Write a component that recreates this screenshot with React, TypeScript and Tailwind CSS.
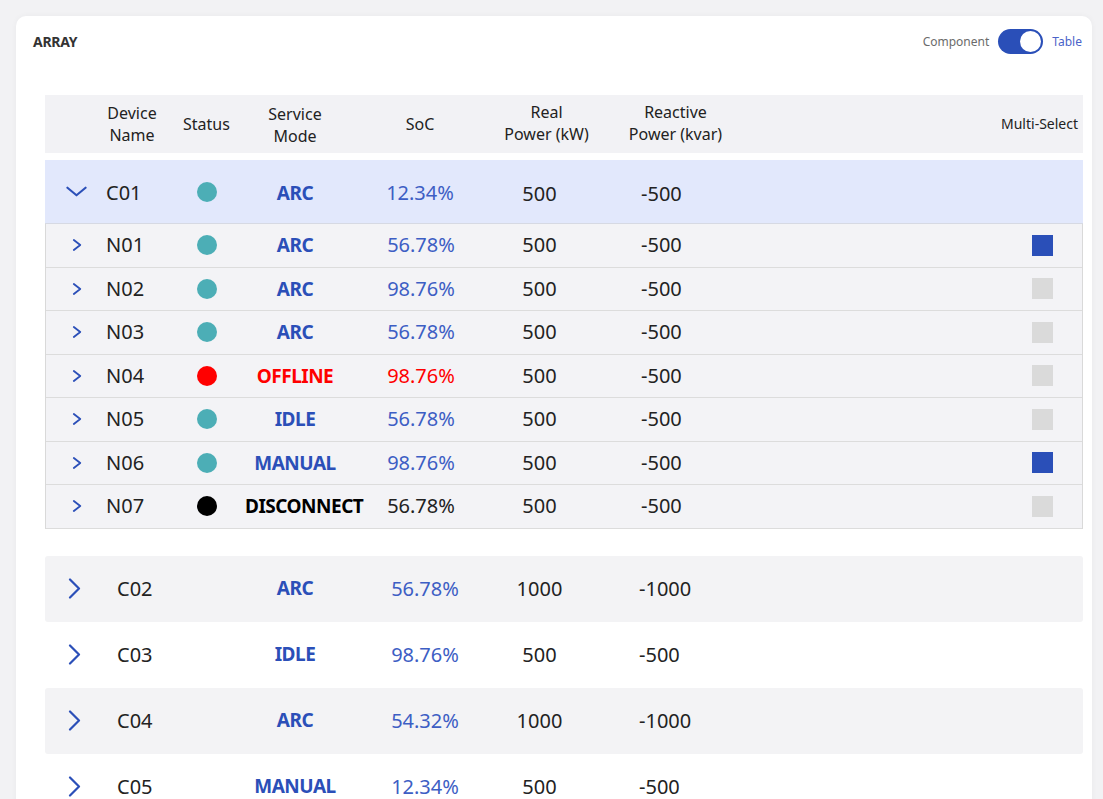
import React from "react";

type Child = { name: string; status: string; mode: string; soc: string; checked: boolean };

const children: Child[] = [
    { name: "N01", status: "ok", mode: "ARC", soc: "56.78%", checked: true },
    { name: "N02", status: "ok", mode: "ARC", soc: "98.76%", checked: false },
    { name: "N03", status: "ok", mode: "ARC", soc: "56.78%", checked: false },
    { name: "N04", status: "offline", mode: "OFFLINE", soc: "98.76%", checked: false },
    { name: "N05", status: "ok", mode: "IDLE", soc: "56.78%", checked: false },
    { name: "N06", status: "ok", mode: "MANUAL", soc: "98.76%", checked: true },
    { name: "N07", status: "disc", mode: "DISCONNECT", soc: "56.78%", checked: false },
];

const clusters = [
    { name: "C02", mode: "ARC", soc: "56.78%", real: "1000", reactive: "-1000", shade: true },
    { name: "C03", mode: "IDLE", soc: "98.76%", real: "500", reactive: "-500", shade: false },
    { name: "C04", mode: "ARC", soc: "54.32%", real: "1000", reactive: "-1000", shade: true },
    { name: "C05", mode: "MANUAL", soc: "12.34%", real: "500", reactive: "-500", shade: false },
];

const dotColor = (s: string) =>
    s === "offline" ? "bg-[#ff0000]" : s === "disc" ? "bg-black" : "bg-[#4caeb6]";

const modeColor = (s: string) =>
    s === "offline" ? "text-[#ff0000]" : s === "disc" ? "text-black" : "text-[#2b4fb8]";

const socColor = (s: string) =>
    s === "offline" ? "text-[#ff0000]" : s === "disc" ? "text-[#222]" : "text-[#3d5ec4]";

const ChevronRight = ({ className }: { className?: string }) => (
    <svg viewBox="0 0 12 14" className={className} fill="none">
        <polyline points="2,1.5 9,7 2,12.5" stroke="#2b4fb8" strokeWidth="2" strokeLinecap="round" strokeLinejoin="round" />
    </svg>
);

const App = () => {
    return <div className="min-h-[799px] bg-[#f2f2f4] pt-4 pl-4 pr-[11px] font-['Noto_Sans',sans-serif] text-[#222]">
        <div className="bg-white rounded-t-[10px] shadow-[0_0_6px_rgba(0,0,0,0.04)] min-h-[783px] pb-4">
            <div className="flex items-center justify-between h-[50px] pl-[17px] pr-[10px] pt-[1px]">
                <div className="text-[14px] font-bold text-[#333] tracking-[-0.3px]">ARRAY</div>
                <div className="flex items-center gap-[9px] text-[12px]">
                    <span className="text-[#6b6b6b]">Component</span>
                    <div className="w-[45px] h-[25px] rounded-full bg-[#2a4fb8] flex items-center justify-end pr-[2px]">
                        <div className="w-[21px] h-[21px] rounded-full bg-white"></div>
                    </div>
                    <span className="text-[#4a63c9]">Table</span>
                </div>
            </div>

            <div className="ml-[29px] mr-[9px] mt-[29px]">
                {/* header */}
                <div className="flex items-center h-[58px] bg-[#f2f2f5] text-[16px] leading-[22px] text-[#222]">
                    <div className="w-[51px]"></div>
                    <div className="w-[72px] text-center">Device<br />Name</div>
                    <div className="w-[77px] text-center">Status</div>
                    <div className="w-[100px] text-center pt-[2px]">Service<br />Mode</div>
                    <div className="w-[150px] text-center">SoC</div>
                    <div className="w-[103px] text-center pb-[2px]">Real<br />Power (kW)</div>
                    <div className="w-[155px] text-center pb-[2px]">Reactive<br />Power (kvar)</div>
                    <div className="grow text-right pr-[5px] text-[14px]">Multi-Select</div>
                </div>

                {/* C01 expanded */}
                <div className="mt-[7px] flex items-center h-[64px] pt-[3px] bg-[#e2e8fc] border-b border-[#d6d9e3] text-[20px]">
                    <div className="w-[51px] flex justify-end pr-[9px] pb-[3px]">
                        <svg viewBox="0 0 22 11" className="w-[21px] h-[11px]" fill="none">
                            <polyline points="1.5,1.5 11,9.5 20.5,1.5" stroke="#2b4fb8" strokeWidth="2.2" strokeLinecap="round" strokeLinejoin="round" />
                        </svg>
                    </div>
                    <div className="w-[72px] pl-[10px]">C01</div>
                    <div className="w-[77px] flex justify-center pb-[3px]"><div className="w-5 h-5 rounded-full bg-[#4caeb6]"></div></div>
                    <div className="w-[100px] text-center font-bold text-[#2b4fb8] text-[19px] tracking-[-0.5px]">ARC</div>
                    <div className="w-[150px] text-center text-[#3d5ec4]">12.34%</div>
                    <div className="w-[89px] text-center pt-[2px]">500</div>
                    <div className="pl-[57px] pt-[2px]">-500</div>
                </div>

                {/* children */}
                <div className="border-x border-[#d9d9d9] bg-[#f3f3f6]">
                    {children.map((c) => (
                        <div key={c.name} className="flex items-center h-[43.5px] border-b border-[#dcdcdc] text-[20px]">
                            <div className="w-[50px] flex justify-end pr-[13px]">
                                <ChevronRight className="w-[11px] h-[14px]" />
                            </div>
                            <div className="w-[72px] pl-[10px]">{c.name}</div>
                            <div className="w-[77px] flex justify-center"><div className={`w-5 h-5 rounded-full ${dotColor(c.status)}`}></div></div>
                            <div className={`w-[100px] text-center font-bold text-[19px] tracking-[-0.5px] whitespace-nowrap ${modeColor(c.status)}`}>{c.mode}</div>
                            <div className={`w-[150px] text-center pl-[2px] ${socColor(c.status)}`}>{c.soc}</div>
                            <div className="w-[89px] text-center">500</div>
                            <div className="grow pl-[57px]">-500</div>
                            <div className="pr-[29px]">
                                <div className={`w-[21px] h-[21px] ${c.checked ? "bg-[#2a4fb8]" : "bg-[#dadada]"}`}></div>
                            </div>
                        </div>
                    ))}
                </div>

                {/* other clusters */}
                <div className="mt-[27px]">
                    {clusters.map((c) => (
                        <div key={c.name} className={`flex items-center h-[66px] rounded-[3px] text-[20px] ${c.shade ? "bg-[#f3f3f5]" : "bg-white"}`}>
                            <div className="w-[51px] flex justify-end pr-[15px]">
                                <svg viewBox="0 0 13 21" className="w-[13px] h-[21px]" fill="none">
                                    <polyline points="2,1.5 11,10.5 2,19.5" stroke="#2b4fb8" strokeWidth="2.2" strokeLinecap="round" strokeLinejoin="round" />
                                </svg>
                            </div>
                            <div className="w-[72px] pl-[21px]">{c.name}</div>
                            <div className="w-[77px]"></div>
                            <div className="w-[100px] text-center font-bold text-[#2b4fb8] text-[19px] tracking-[-0.5px]">{c.mode}</div>
                            <div className="w-[150px] text-center pl-[10px] text-[#3d5ec4]">{c.soc}</div>
                            <div className="w-[89px] text-center">{c.real}</div>
                            <div className="pl-[55px]">{c.reactive}</div>
                        </div>
                    ))}
                </div>
            </div>
        </div>
    </div>
};

export default App;
